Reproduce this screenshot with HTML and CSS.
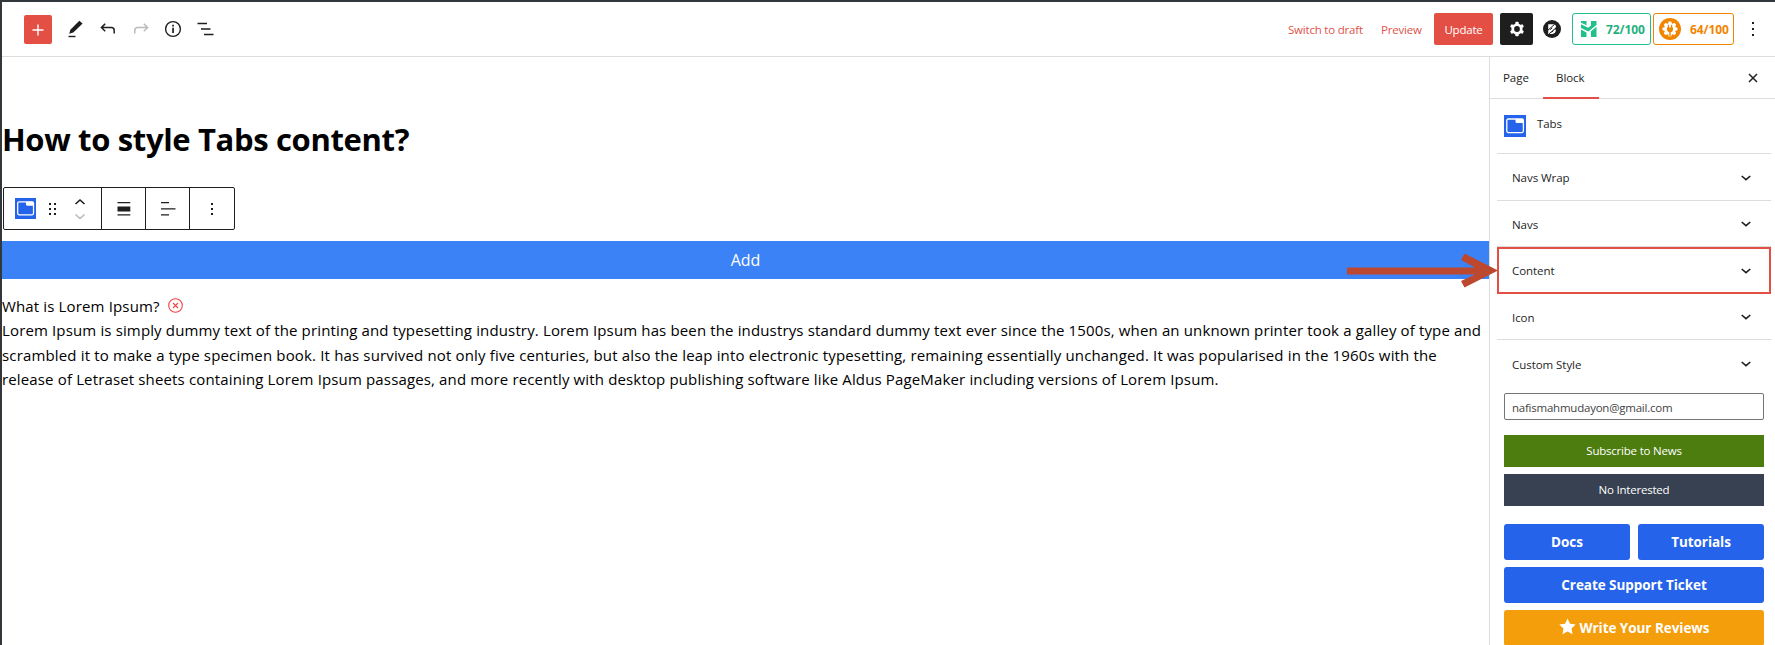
FILE: index.html
```html
<!DOCTYPE html>
<html lang="en">
<head>
<meta charset="utf-8">
<title>How to style Tabs content?</title>
<link rel="stylesheet" href="styles.css">
</head>
<body>
<div class="app">
  <header class="topbar">
    <div class="tools">
      <button class="add-btn" aria-label="Add block"><svg width="28" height="29" viewBox="0 0 28 29"><path d="M14 9.500v11M8.500 15h11" stroke="#fff" stroke-width="1.400"/></svg></button>
      <svg class="tool pen" width="16" height="18" viewBox="0 0 16 18"><path d="M1.200 13.800 2.400 9.800 11.300.8 14.600 3.400 5.300 12.600Z" fill="#1e1e1e"/><path d="M.5 16.500h7" stroke="#1e1e1e" stroke-width="1.400"/></svg>
      <svg class="tool undo" width="16" height="12" viewBox="0 0 16 12" fill="none" stroke="#1e1e1e" stroke-width="1.500"><path d="M5.200.8 1.400 4.600l3.800 3.700M1.500 4.600h9.700c2 0 3 1 3 3V10.500"/></svg>
      <svg class="tool redo" width="16" height="12" viewBox="0 0 16 12" fill="none" stroke="#bbb" stroke-width="1.500"><path d="M10.800.8l3.800 3.800-3.800 3.700M14.500 4.600H4.800c-2 0-3 1-3 3V10.500"/></svg>
      <svg class="tool info" width="18" height="18" viewBox="0 0 18 18"><circle cx="9" cy="9" r="7.400" fill="none" stroke="#1e1e1e" stroke-width="1.400"/><path d="M8.200 7.800h1.700V13H8.200zM8.200 4.800h1.700v1.700H8.200z" fill="#1e1e1e"/></svg>
      <svg class="tool list" width="18" height="14" viewBox="0 0 18 14" stroke="#1e1e1e" stroke-width="1.500"><path d="M.5 1.400h9.500M4 7h9.500M7 12.500h9.500"/></svg>
    </div>
    <div class="actions">
      <a class="link draft">Switch to draft</a>
      <a class="link preview">Preview</a>
      <button class="update">Update</button>
      <button class="settings" aria-label="Settings"><svg width="16" height="16" viewBox="-8 -8 16 16"><g fill="#fff"><circle r="5.600"/><rect x="-1.700" y="-7.200" width="3.400" height="14.400" rx="1"/><rect x="-1.700" y="-7.200" width="3.400" height="14.400" rx="1" transform="rotate(60)"/><rect x="-1.700" y="-7.200" width="3.400" height="14.400" rx="1" transform="rotate(120)"/></g><circle r="2.900" fill="#1e1e1e"/></svg></button>
      <svg class="brand" width="18" height="18" viewBox="0 0 18 18"><circle cx="9" cy="9" r="9" fill="#1e1e1e"/><path d="M5.200 4.200H10q3.200.2 3 2.600-.2 1.500-1.300 2 1.300.6 1.100 2.300-.4 2.700-3.300 2.900H5.200z" fill="#fff"/><path d="M4.500 10.500 11.500 4.500M6 13.800 13.500 7.500M7.200 9.600 9.200 8M8.600 12.300l2-1.700" stroke="#1e1e1e" stroke-width="1"/></svg>
      <div class="score green"><svg width="16" height="16" viewBox="0 0 16 16"><path fill="#1fc08a" d="M0 0h5.500v4.200L0 1.800zM0 3.200l7.200 3.500L10 4.500V0h5.500v4L7.300 10.500 0 7zM0 8.500l5.500 3V16H0zM10 10.200 15.500 5.800V16H10z"/></svg><span>72/100</span></div>
      <div class="score orange"><svg width="22" height="22" viewBox="-11 -11 22 22"><circle r="11" fill="#f18500"/><g fill="#fff"><circle r="6"/><rect x="-1.600" y="-7.500" width="3.200" height="15" rx=".8"/><rect x="-1.600" y="-7.500" width="3.200" height="15" rx=".8" transform="rotate(45)"/><rect x="-1.600" y="-7.500" width="3.200" height="15" rx=".8" transform="rotate(90)"/><rect x="-1.600" y="-7.500" width="3.200" height="15" rx=".8" transform="rotate(135)"/></g><path d="M-3-1.500h6V.8Q2.800 3 .7 3.300V7.500H-.7V3.300Q-2.800 3-3 .8zM-2.200-4.300h1.200v3h-1.200zM1-4.300h1.200v3H1z" fill="#f18500"/></svg><span>64/100</span></div>
      <svg class="more" width="4" height="16" viewBox="0 0 4 16" fill="#1e1e1e"><path d="M1 1h2v2H1zM1 7h2v2H1zM1 13h2v2H1z"/></svg>
    </div>
  </header>
  <div class="body">
    <main class="canvas">
      <h1>How to style Tabs content?</h1>
      <div class="block-toolbar">
        <div class="seg seg-main">
          <svg class="tabs-icon" width="21" height="21" viewBox="0 0 22 22"><path fill="#2563eb" d="M0 0h22v22H0z"/><rect x="2.800" y="4" width="16.600" height="13.600" rx="1.500" fill="none" stroke="#fff" stroke-width="1.300"/><path d="M11.500 4h7.800v4h-6.500q-1.300 0-1.300-1.500z" fill="#fff"/></svg>
          <svg class="drag" width="8" height="14" viewBox="0 0 8 14" fill="#1e1e1e"><path d="M0 1h2v2H0zM5 1h2v2H5zM0 6h2v2H0zM5 6h2v2H5zM0 11h2v2H0zM5 11h2v2H5z"/></svg>
          <svg class="move" width="12" height="22" viewBox="0 0 12 22" fill="none" stroke-width="1.600"><path d="m1.500 6 4.500-4 4.500 4" stroke="#1e1e1e"/><path d="m1.500 16.500 4.500 4 4.500-4" stroke="#bbb"/></svg>
        </div>
        <div class="seg"><svg width="14" height="16" viewBox="0 0 14 16"><path fill="#1e1e1e" d="M.5 1h12.800v1.300H.5zM.5 5.500h12.800v5H.5zM.5 13.300h12.800v1.300H.5z"/></svg></div>
        <div class="seg"><svg width="16" height="16" viewBox="0 0 16 16"><path fill="#1e1e1e" d="M1 1h8v1.300H1zM1 7.300h14.500v1.300H1zM1 13.300h8v1.300H1z"/></svg></div>
        <div class="seg seg-last"><svg width="4" height="16" viewBox="0 0 4 16"><path fill="#1e1e1e" d="M1 2h2v2H1zM1 7h2v2H1zM1 12h2v2H1z"/></svg></div>
      </div>
      <div class="add-bar">Add</div>
      <div class="copy">
        <div class="line l0"><span>What is Lorem Ipsum?</span><svg class="remove" width="15" height="15" viewBox="0 0 15 15" fill="none" stroke="#ef4444" stroke-width="1.100"><circle cx="7.500" cy="7.500" r="6.800"/><path d="m5 5 5 5m0-5-5 5"/></svg></div>
        <div class="line l1">Lorem Ipsum is simply dummy text of the printing and typesetting industry. Lorem Ipsum has been the industrys standard dummy text ever since the 1500s, when an unknown printer took a galley of type and</div>
        <div class="line l2">scrambled it to make a type specimen book. It has survived not only five centuries, but also the leap into electronic typesetting, remaining essentially unchanged. It was popularised in the 1960s with the</div>
        <div class="line l3">release of Letraset sheets containing Lorem Ipsum passages, and more recently with desktop publishing software like Aldus PageMaker including versions of Lorem Ipsum.</div>
      </div>
    </main>
    <aside class="sidebar">
      <div class="side-tabs"><span class="tab page">Page</span><span class="tab active">Block</span><svg class="close" width="10" height="10" viewBox="0 0 10 10"><path d="m1 1 8 8M9 1 1 9" stroke="#1e1e1e" stroke-width="1.500"/></svg></div>
      <div class="card"><svg width="22" height="22" viewBox="0 0 22 22"><path fill="#2563eb" d="M0 0h22v22H0z"/><rect x="2.800" y="4" width="16.600" height="13.600" rx="1.500" fill="none" stroke="#fff" stroke-width="1.300"/><path d="M11.500 4h7.800v4h-6.500q-1.300 0-1.300-1.500z" fill="#fff"/></svg><span>Tabs</span></div>
      <div class="panel"><span>Navs Wrap</span><svg class="chev" width="10" height="6" viewBox="0 0 10 6"><path d="M.7 1 5 4.600 9.300 1"/></svg></div>
      <div class="panel"><span>Navs</span><svg class="chev" width="10" height="6" viewBox="0 0 10 6"><path d="M.7 1 5 4.600 9.300 1"/></svg></div>
      <div class="panel marked"><span>Content</span><svg class="chev" width="10" height="6" viewBox="0 0 10 6"><path d="M.7 1 5 4.600 9.300 1"/></svg></div>
      <div class="panel"><span>Icon</span><svg class="chev" width="10" height="6" viewBox="0 0 10 6"><path d="M.7 1 5 4.600 9.300 1"/></svg></div>
      <div class="panel"><span>Custom Style</span><svg class="chev" width="10" height="6" viewBox="0 0 10 6"><path d="M.7 1 5 4.600 9.300 1"/></svg></div>
      <div class="email">nafismahmudayon@gmail.com</div>
      <div class="flat subscribe">Subscribe to News</div>
      <div class="flat decline">No Interested</div>
      <div class="buttons">
        <a class="btn">Docs</a><a class="btn">Tutorials</a>
        <a class="btn wide">Create Support Ticket</a>
        <a class="btn wide review"><svg class="star" width="17" height="17" viewBox="0 0 17 17"><path fill="#fff" d="m8.500.5 2.500 5.200 5.700.8-4.200 4 1 5.700-5-2.700-5 2.700 1-5.700-4.200-4 5.700-.8z"/></svg><span>Write Your Reviews</span></a>
      </div>
    </aside>
  </div>
  <i class="edge-mark m1"></i><i class="edge-mark m2"></i>
  <svg class="arrow" width="152" height="36" viewBox="0 0 152 36"><path d="M0 14.500h128L114 7l3.500-6.500L151 17.500 117.500 34.500 114 28l14-6.500H0z" fill="#bd4830"/></svg>
</div>
</body>
</html>
```
FILE: styles.css
```css
* { box-sizing: border-box; }
body { margin: 0; font-family: "Open Sans", "Noto Sans", sans-serif; color: #1e1e1e; background: #fff; }
svg { display: block; flex: none; }
button { border: 0; padding: 0; margin: 0; font: inherit; letter-spacing: inherit; }
.app { position: relative; width: 1775px; height: 645px; overflow: hidden; border-top: 2px solid #32373c; border-left: 2px solid #32373c; display: flex; flex-direction: column; }
.topbar { height: 55px; flex: none; border-bottom: 1px solid #ddd; display: flex; justify-content: space-between; align-items: center; padding-right: 20px; font-size: 11.500px; letter-spacing: -.2px; white-space: nowrap; }
.tools, .actions { display: flex; align-items: center; }
.tools { padding-left: 22px; }
.add-btn { width: 28px; height: 29px; background: #e34f45; border-radius: 2px; }
.pen { margin-left: 16px; }
.undo { margin-left: 16px; }
.redo { margin-left: 17px; }
.info { margin-left: 15px; }
.list { margin-left: 15px; }
.link { color: #e0524a; }
.draft { width: 93px; }
.preview { width: 53px; }
.update { width: 59px; height: 32px; background: #e34f45; color: #fff; border-radius: 2px; }
.settings { width: 33px; height: 32px; margin-left: 7px; background: #1e1e1e; border-radius: 2px; display: flex; align-items: center; justify-content: center; }
.brand { margin-left: 10px; }
.score { height: 32px; border: 1px solid; border-radius: 3px; display: flex; align-items: center; font-size: 12px; font-weight: 700; letter-spacing: -.1px; }
.green { width: 79px; margin-left: 11px; padding-left: 8px; gap: 9px; color: #1fb17f; border-color: #1fc08a; }
.orange { width: 81px; margin-left: 2px; padding-left: 5px; gap: 9px; color: #f18500; }
.more { margin-left: 17px; }
.body { flex: 1; display: flex; min-height: 0; }
.canvas { width: 1487px; flex: none; padding-top: 59px; }
h1 { margin: 0; height: 46px; line-height: 46px; font-size: 31px; font-weight: 700; letter-spacing: -.35px; color: #000; white-space: nowrap; }
.block-toolbar { width: 232px; height: 43px; margin: 25px 0 11px 1px; border: 1px solid #1e1e1e; border-radius: 2px; display: flex; }
.seg { width: 44px; flex: none; display: flex; align-items: center; justify-content: center; border-left: 1px solid #1e1e1e; }
.seg-main { width: 97px; border-left: 0; justify-content: flex-start; padding-left: 11px; }
.seg-last { flex: 1; }
.drag { margin-left: 13px; }
.move { margin-left: 17px; }
.add-bar { height: 38px; line-height: 39px; background: #3b82f6; color: #fff; text-align: center; font-size: 16px; }
.copy { padding-top: 15px; font-size: 15px; color: #000; }
.line { height: 24.300px; line-height: 24.300px; white-space: nowrap; display: flex; letter-spacing: .145px; }
.l1 { letter-spacing: .141px; }
.l2 { letter-spacing: .156px; }
.remove { margin: 4px 0 0 8px; }
.sidebar { width: 286px; flex: none; border-left: 1px solid #ddd; font-size: 11.500px; letter-spacing: -.05px; white-space: nowrap; }
.side-tabs { height: 42px; border-bottom: 1px solid #ddd; display: flex; align-items: center; }
.tab { width: 53px; padding-left: 13px; }
.active { width: 56px; height: 42px; line-height: 42px; border-bottom: 2px solid #e34f45; }
.close { margin-left: auto; margin-right: 17px; }
.card { height: 55px; margin: 0 4px 0 7px; padding: 16px 0 0 7px; border-bottom: 1px solid #ddd; display: flex; gap: 11px; line-height: 18px; }
.panel { height: 46.500px; margin: 0 4px 0 7px; padding: 2px 20px 0 15px; border-bottom: 1px solid #ddd; display: flex; align-items: center; justify-content: space-between; }
.panel:nth-child(7) { border-bottom-color: transparent; height: 47px; }
.marked { border: 2px solid #e34f45; padding: 1px 18px 0 13px; }
.chev { fill: none; stroke: #1e1e1e; stroke-width: 1.600; }
.email { height: 27px; margin: 6px 11px 15px 14px; padding-left: 7px; line-height: 27px; border: 1px solid #757575; border-radius: 2px; color: #444; letter-spacing: -.23px; }
.flat { height: 32px; line-height: 32px; margin: 0 11px 7px 14px; color: #fff; text-align: center; letter-spacing: -.21px; }
.subscribe { background: #4d7c0f; }
.decline { background: #374151; }
.buttons { margin: 18px 11px 0 14px; display: grid; grid-template-columns: 1fr 1fr; gap: 7px 8px; font-size: 13.500px; font-weight: 700; }
.btn { height: 36px; display: flex; align-items: center; justify-content: center; color: #fff; background: #2563eb; border-radius: 3px; }
.wide { grid-column: span 2; }
.review { background: #f59e0b; gap: 4px; }
.star { margin-top: -4px; }
.arrow { position: absolute; left: 1345px; top: 251px; }
.edge-mark { position: absolute; left: -2px; width: 2px; background: #e34f45; }
.m1 { top: 174px; height: 10px; }
.m2 { top: 194px; height: 11px; }
```
